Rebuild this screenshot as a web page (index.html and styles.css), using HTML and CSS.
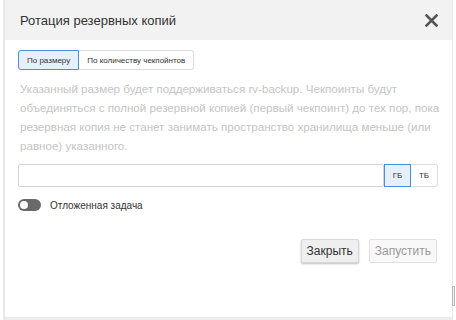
FILE: index.html
```html
<!DOCTYPE html>
<html lang="ru">
  <head>
    <meta charset="UTF-8" />
    <title>Ротация резервных копий</title>
    <link rel="stylesheet" href="styles.css">
  </head>
  <body>
    <div class="dialog">
      <header class="dialog-header">
        <span class="dialog-title">Ротация резервных копий</span>
        <button class="close-btn" aria-label="Закрыть">
          <svg width="13" height="13" viewBox="0 0 13 13">
            <path d="M1.5 1.5 L11.5 11.5 M11.5 1.5 L1.5 11.5" stroke="#555" stroke-width="2.6" stroke-linecap="square" />
          </svg>
        </button>
      </header>
      <div class="dialog-body">
        <div class="btn-group">
          <button class="seg-btn active">По размеру</button>
          <button class="seg-btn">По количеству чекпойнтов</button>
        </div>
        <p class="hint">
          Указанный размер будет поддерживаться rv-backup. Чекпоинты будут<br>
          объединяться с полной резервной копией (первый чекпоинт) до тех пор, пока<br>
          резервная копия не станет занимать пространство хранилища меньше (или<br>
          равное) указанного.
        </p>
        <div class="size-row">
          <input type="text" class="size-input" />
          <button class="seg-btn unit active">ГБ</button>
          <button class="seg-btn unit">ТБ</button>
        </div>
        <label class="switch-row">
          <span class="switch"><span class="knob"></span></span>
          <span>Отложенная задача</span>
        </label>
        <div class="actions">
          <button class="btn btn-close">Закрыть</button>
          <button class="btn btn-run" disabled>Запустить</button>
        </div>
      </div>
    </div>
    <div class="scroll-nub"></div>
  </body>
</html>
```

FILE: styles.css
```css
* {
  box-sizing: border-box;
}
body {
  margin: 0;
  padding: 0 0 0 3px;
  width: 456px;
  height: 320px;
  overflow: hidden;
  background: #fff;
  font-family: "Liberation Sans", Arial, sans-serif;
  position: relative;
}
.dialog {
  width: 450px;
  height: 320px;
  border-left: 2px solid #e8e8e8;
  border-right: 1px solid #e8e8e8;
  border-bottom: 3px solid #ececec;
  background: #fff;
}
.dialog-header {
  height: 40px;
  background: #f2f2f2;
  display: flex;
  align-items: center;
  justify-content: space-between;
  padding: 0 14px 0 15px;
}
.dialog-title {
  font-size: 13px;
  color: #333;
}
.close-btn {
  border: none;
  background: none;
  padding: 0;
  width: 13px;
  height: 13px;
  display: flex;
  cursor: pointer;
}
.dialog-body {
  padding: 10px 14px 0 13px;
}
.btn-group {
  display: flex;
}
.seg-btn {
  font-family: inherit;
  font-size: 8px;
  color: #333;
  background: #fff;
  border: 1px solid #dcdcdc;
  height: 20px;
  padding: 0 8px;
  cursor: pointer;
}
.seg-btn:first-child {
  border-radius: 3px 0 0 3px;
}
.seg-btn:last-child {
  border-radius: 0 3px 3px 0;
  border-left: none;
}
.seg-btn.active {
  background: #e6f0fb;
  border-color: #4a8fdd;
}
.hint {
  margin: 9px -20px 9px 2px;
  font-size: 11.6px;
  line-height: 19px;
  color: #c4c4c4;
  white-space: nowrap;
}
.size-row {
  display: flex;
  height: 23px;
}
.size-input {
  flex: 1;
  height: 23px;
  border: 1px solid #d4d4d4;
  border-radius: 2px;
  margin: 0;
}
.seg-btn.unit {
  height: 23px;
  width: 27px;
  padding: 0;
  border-radius: 0;
}
.seg-btn.unit:last-child {
  border-radius: 0 3px 3px 0;
  border-left: none;
}
.switch-row {
  display: flex;
  align-items: center;
  gap: 9px;
  margin-top: 12px;
  font-size: 10px;
  color: #333;
}
.switch {
  width: 23px;
  height: 12px;
  border-radius: 6px;
  background: #6a6a6a;
  display: flex;
  align-items: center;
  padding: 0 2px;
}
.knob {
  width: 8px;
  height: 8px;
  border-radius: 50%;
  background: #fff;
}
.actions {
  display: flex;
  justify-content: flex-end;
  gap: 10px;
  margin-top: 28px;
  padding-right: 1px;
}
.btn {
  font-family: inherit;
  font-size: 12px;
  height: 24px;
  padding: 0 5px;
  border-radius: 2px;
  cursor: pointer;
}
.btn-close {
  background: #efefef;
  color: #333;
  border: 1px solid #d8d8d8;
  box-shadow: 0 1px 2px rgba(0, 0, 0, 0.25);
}
.btn-run {
  background: #f8f8f8;
  color: #999;
  border: 1px solid #e0e0e0;
}
.scroll-nub {
  position: absolute;
  right: 1px;
  top: 286px;
  width: 3px;
  height: 20px;
  background: #f0f0f0;
  border: 1px solid #b8b8b8;
}
```
